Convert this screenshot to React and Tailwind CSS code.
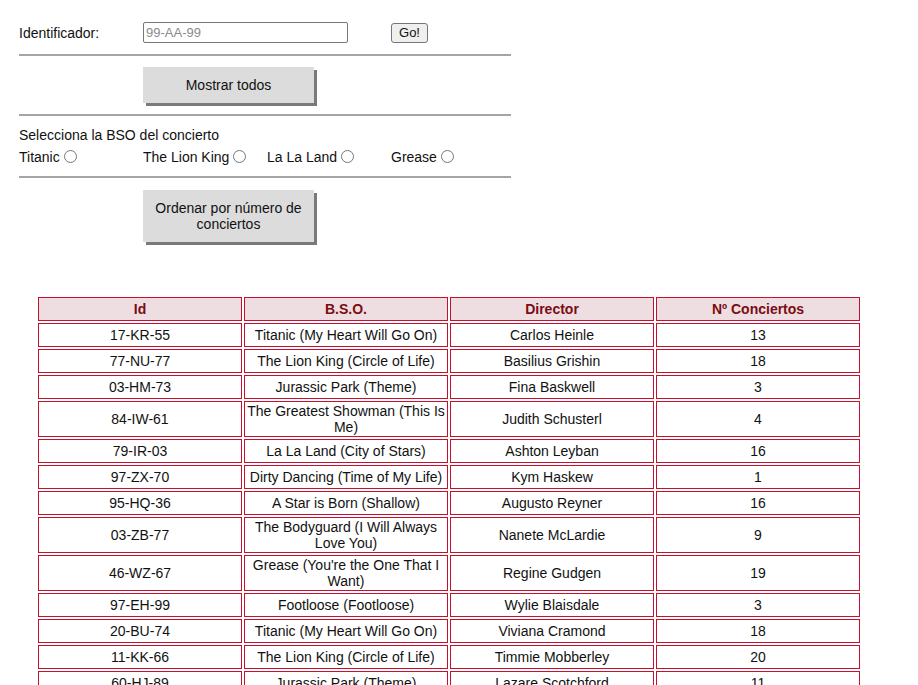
import React from "react";

const conciertos = [
  ["17-KR-55", "Titanic (My Heart Will Go On)", "Carlos Heinle", 13],
  ["77-NU-77", "The Lion King (Circle of Life)", "Basilius Grishin", 18],
  ["03-HM-73", "Jurassic Park (Theme)", "Fina Baskwell", 3],
  ["84-IW-61", "The Greatest Showman (This Is Me)", "Judith Schusterl", 4],
  ["79-IR-03", "La La Land (City of Stars)", "Ashton Leyban", 16],
  ["97-ZX-70", "Dirty Dancing (Time of My Life)", "Kym Haskew", 1],
  ["95-HQ-36", "A Star is Born (Shallow)", "Augusto Reyner", 16],
  ["03-ZB-77", "The Bodyguard (I Will Always Love You)", "Nanete McLardie", 9],
  ["46-WZ-67", "Grease (You're the One That I Want)", "Regine Gudgen", 19],
  ["97-EH-99", "Footloose (Footloose)", "Wylie Blaisdale", 3],
  ["20-BU-74", "Titanic (My Heart Will Go On)", "Viviana Cramond", 18],
  ["11-KK-66", "The Lion King (Circle of Life)", "Timmie Mobberley", 20],
  ["60-HJ-89", "Jurassic Park (Theme)", "Lazare Scotchford", 11],
  ["52-LP-18", "La La Land (City of Stars)", "Dorene Tabart", 7],
];

const bandas = ["Titanic", "The Lion King", "La La Land", "Grease"];

const Separador = () => <div className="h-[2px] w-[492px] bg-[#a5a5a5]" />;

const BotonGris = ({ children, className = "" }) => (
  <button
    className={
      "w-[171px] bg-[#dcdcdc] text-[14px] leading-[16px] text-[#111] shadow-[3px_3px_0_#7a7a7a] " +
      className
    }
  >
    {children}
  </button>
);

export default function App() {
  return (
    <div className="min-h-screen bg-white text-[14px] leading-[16px] text-[#111] font-['Liberation_Sans',Arial,sans-serif]">
      <div className="pl-[19px] pt-[22px]">
        {/* Búsqueda por identificador */}
        <div className="grid grid-cols-[124px_248px_120px] items-center h-[21px]">
          <label>Identificador:</label>
          <input
            type="text"
            placeholder="99-AA-99"
            className="w-[205px] h-[21px] border border-[#767676] rounded-[2px] px-[2px] text-[13px] placeholder:text-[#8a8a8a] font-['Liberation_Sans',Arial,sans-serif]"
          />
          <button className="w-[37px] h-[20px] border border-[#767676] rounded-[3px] bg-[#efefef] text-[13px] leading-[16px]">
            Go!
          </button>
        </div>

        <div className="mt-[11px]">
          <Separador />
        </div>

        <div className="mt-[11px] pl-[124px]">
          <BotonGris className="h-[36px]">Mostrar todos</BotonGris>
        </div>

        <div className="mt-[11px]">
          <Separador />
        </div>

        {/* Filtro por BSO */}
        <p className="mt-[11px]">Selecciona la BSO del concierto</p>
        <div className="grid grid-cols-[124px_124px_124px_120px] mt-[6px]">
          {bandas.map((b) => (
            <label key={b} className="flex items-center">
              {b}
              <input type="radio" name="bso" className="ml-[4px] w-[13px] h-[13px] mt-[-2px]" />
            </label>
          ))}
        </div>

        <div className="mt-[11px]">
          <Separador />
        </div>

        <div className="mt-[12px] pl-[124px]">
          <BotonGris className="h-[52px] px-[8px]">
            Ordenar por número de conciertos
          </BotonGris>
        </div>
      </div>

      {/* Tabla de conciertos */}
      <table className="mt-[53px] ml-[36px] w-[826px] table-fixed border-separate border-spacing-[2px] text-center">
        <thead>
          <tr>
            {["Id", "B.S.O.", "Director", "Nº Conciertos"].map((h) => (
              <th
                key={h}
                className="h-[24px] border border-[#c8102e] bg-[#efdee1] p-[1px] font-bold text-[#7a0c14]"
              >
                {h}
              </th>
            ))}
          </tr>
        </thead>
        <tbody>
          {conciertos.map(([id, bso, director, num]) => (
            <tr key={id}>
              <td className="h-[24px] border border-[#c8102e] p-[1px]">{id}</td>
              <td className="h-[24px] border border-[#c8102e] p-[1px]">{bso}</td>
              <td className="h-[24px] border border-[#c8102e] p-[1px]">{director}</td>
              <td className="h-[24px] border border-[#c8102e] p-[1px]">{num}</td>
            </tr>
          ))}
        </tbody>
      </table>
    </div>
  );
}
